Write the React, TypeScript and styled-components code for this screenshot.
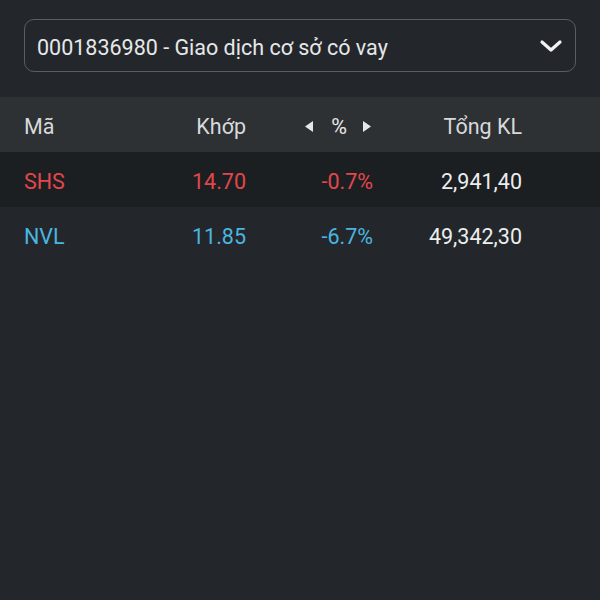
import React from "react";
import styled, { createGlobalStyle } from "styled-components";

const Global = createGlobalStyle`
  html, body { margin: 0; padding: 0; background: #23272b; }
  body { font-family: Roboto, "Noto Sans", sans-serif; }
`;

const Page = styled.div`
  width: 600px;
  height: 600px;
  background: #23272b;
  display: flex;
  flex-direction: column;
`;

const Top = styled.div`
  height: 97px;
  padding: 19px 24px 0 24px;
  box-sizing: border-box;
`;

const Select = styled.div`
  height: 53px;
  box-sizing: border-box;
  border: 1.5px solid #5a5e62;
  border-radius: 10px;
  display: flex;
  align-items: center;
  justify-content: space-between;
  padding: 3px 12px 0 12px;
  color: #e6e7e8;
  font-size: 21.5px;
`;

const Chevron = styled.svg`
  width: 24px;
  height: 14px;
  display: block;
  margin-top: -3px;
`;

const Row = styled.div<{ $bg: string }>`
  height: 55px;
  box-sizing: border-box;
  padding-top: 3px;
  background: ${(p) => p.$bg};
  display: grid;
  grid-template-columns: 122px 100px 127px 149px;
  align-items: center;
  padding-left: 24px;
  font-size: 21.5px;
`;

const Cell = styled.div<{ $color: string; $align?: string }>`
  color: ${(p) => p.$color};
  text-align: ${(p) => p.$align || "right"};
  white-space: nowrap;
`;

const PctHead = styled.div`
  display: flex;
  justify-content: flex-end;
  align-items: center;
  padding-right: 2px;
  color: #e6e7e8;
`;

const Arrow = styled.svg`
  width: 8px;
  height: 11px;
  display: block;
`;

const Pct = styled.span`
  margin: 0 16px 0 18px;
`;

const HEAD = "#d8d9da";
const WHITE = "#eceded";
const RED = "#e2474b";
const BLUE = "#4bb5e0";

export default function App() {
  return (
    <>
      <Global />
      <Page>
        <Top>
          <Select>
            <span>0001836980 - Giao dịch cơ sở có vay</span>
            <Chevron viewBox="0 0 24 14">
              <path d="M3 3 L12 11 L21 3" fill="none" stroke="#f2f2f2" strokeWidth="3.2" strokeLinecap="round" strokeLinejoin="round" />
            </Chevron>
          </Select>
        </Top>
        <Row $bg="#2d3134">
          <Cell $color={HEAD} $align="left">Mã</Cell>
          <Cell $color={HEAD}>Khớp</Cell>
          <PctHead>
            <Arrow viewBox="0 0 8 11"><path d="M8 0 L0 5.5 L8 11 Z" fill="#e6e7e8" /></Arrow>
            <Pct>%</Pct>
            <Arrow viewBox="0 0 8 11"><path d="M0 0 L8 5.5 L0 11 Z" fill="#e6e7e8" /></Arrow>
          </PctHead>
          <Cell $color={HEAD}>Tổng KL</Cell>
        </Row>
        <Row $bg="#1c1f22">
          <Cell $color={RED} $align="left">SHS</Cell>
          <Cell $color={RED}>14.70</Cell>
          <Cell $color={RED}>-0.7%</Cell>
          <Cell $color={WHITE}>2,941,40</Cell>
        </Row>
        <Row $bg="#23272b">
          <Cell $color={BLUE} $align="left">NVL</Cell>
          <Cell $color={BLUE}>11.85</Cell>
          <Cell $color={BLUE}>-6.7%</Cell>
          <Cell $color={WHITE}>49,342,30</Cell>
        </Row>
      </Page>
    </>
  );
}
